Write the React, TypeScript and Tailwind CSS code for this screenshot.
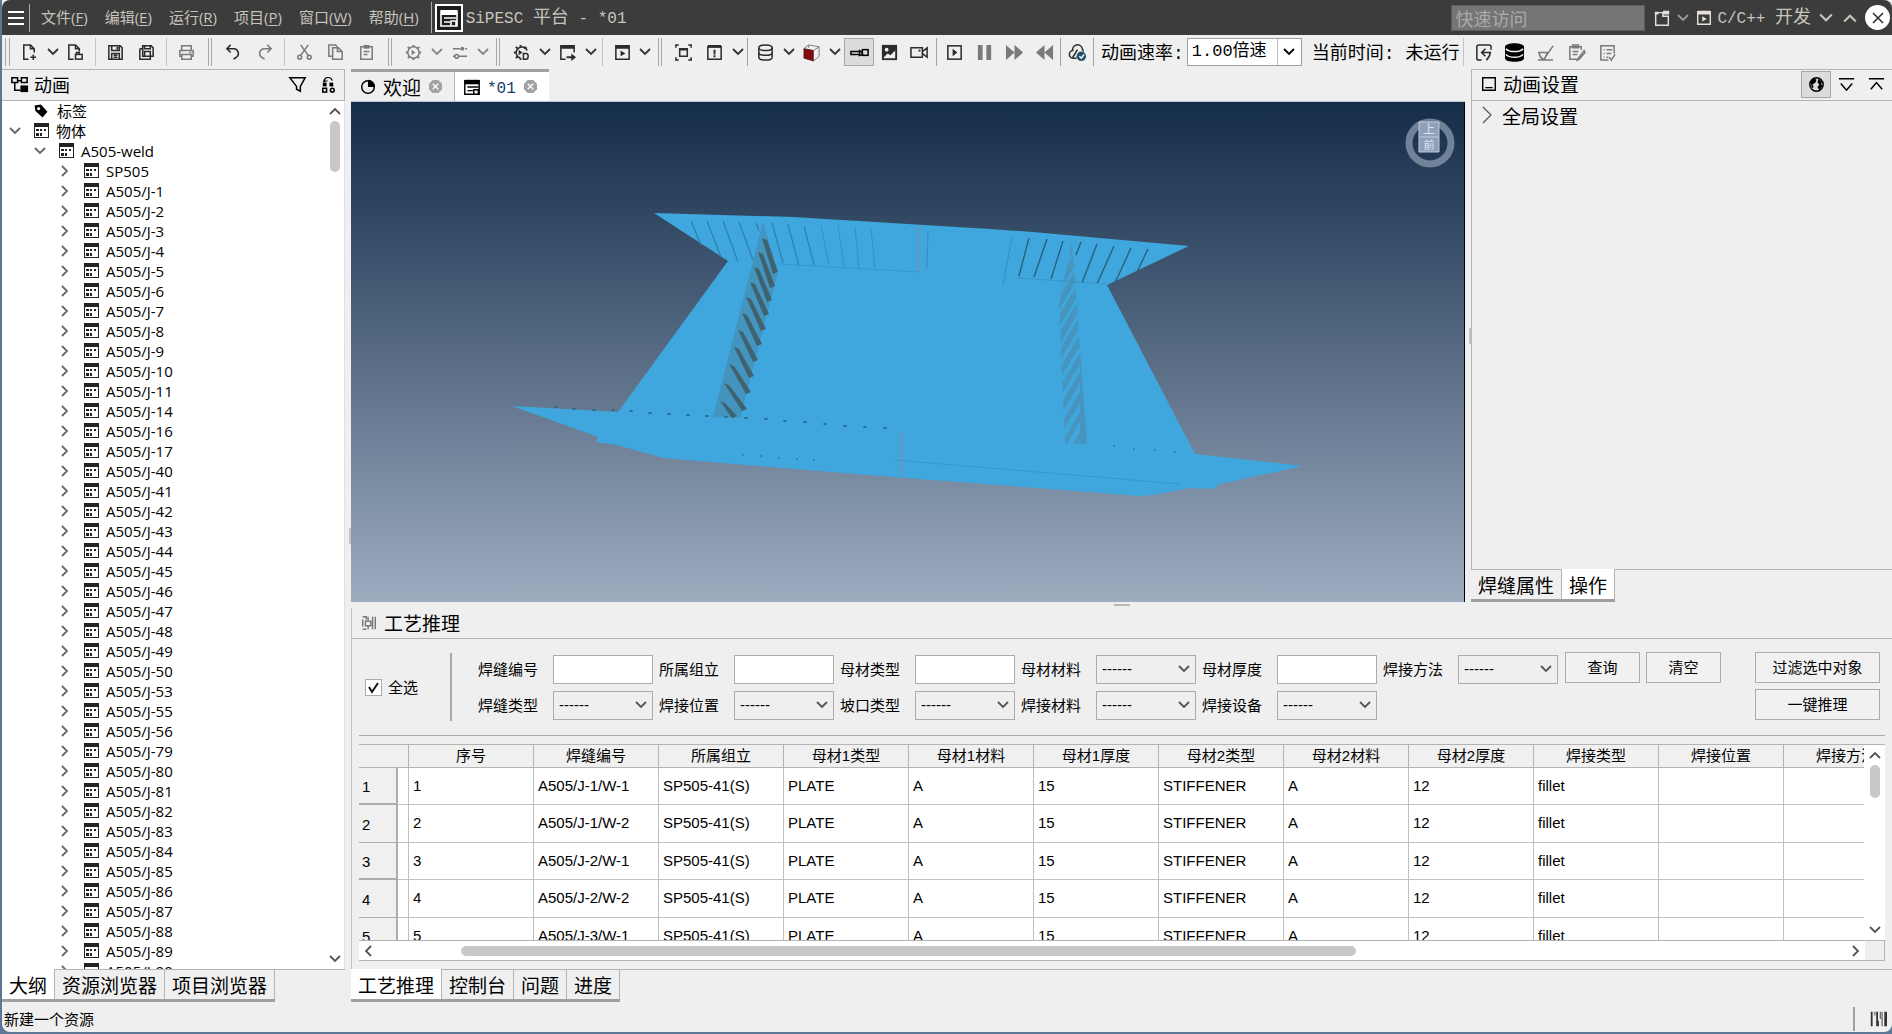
import { useState } from 'react'
import type { ReactNode } from 'react'
import clsx from 'clsx'

const CJK = "font-['Noto_Sans_CJK_SC',sans-serif]"
const MONO = "font-['Liberation_Mono','Noto_Sans_CJK_SC',monospace]"

const solid = { fill: 'currentColor', stroke: 'none' }

// every glyph is drawn on a 20 x 20 grid
const glyphs: Record<string, ReactNode> = {
  newFile: <path d="M9 17H4V2h7l4 4v4M11 2v4h4M14 12v6M11 15h6" />,
  fileLock: (
    <>
      <path d="M8 17H3V2h7l4 4v3M10 2v4h4" />
      <rect x="10" y="12" width="7" height="5" />
      <path d="M11 12v-2h3v2" />
    </>
  ),
  save: (
    <>
      <path d="M3 3h12l2 2v12H3zM6 3v5h8V3M6 17v-6h8v6M8 13h4M8 15h4" />
      <path d="M11 4h2v3h-2z" {...solid} />
    </>
  ),
  saveAll: (
    <>
      <path d="M6 3h9l2 2v9H6zM8 3v3h6V3M8 14v-5h6v5" />
      <path d="M3 6v11h11v-3M3 6h3" />
    </>
  ),
  print: <path d="M5 8V3h10v5M5 14H3V8h14v6h-2M5 12h10v5H5zM13 10h2" />,
  undo: <path d="M7 2L3 6l4 4M3 6h8a5 5 0 0 1 2 9l-3 2" />,
  redo: <path d="M13 2l4 4-4 4M17 6H9a5 5 0 0 0-2 9l3 2" />,
  cut: (
    <>
      <circle cx="5" cy="15" r="2" />
      <circle cx="15" cy="15" r="2" />
      <path d="M6 13L14 2M14 13L6 2" />
    </>
  ),
  copy: <path d="M6 14H3V2h7l2 2M7 5h6l4 4v8H7zM12 5v4h4" />,
  paste: (
    <>
      <path d="M4 4h12v13H4zM7 9h6M7 12h4" />
      <path d="M7 2h6v4H7z" {...solid} />
    </>
  ),
  gearPlay: (
    <>
      <circle cx="10" cy="10" r="6" />
      <path d="M10 2v2M10 16v2M2 10h2M16 10h2M4 4l2 2M14 14l2 2M16 4l-2 2M4 16l2-2" strokeWidth="2" />
      <path d="M8 7l4 3-4 3z" {...solid} />
    </>
  ),
  gearD: (
    <>
      <path d="M16 8a6 6 0 1 0-7 8" />
      <path d="M9 2v2M2 10h2M4 4l2 2M15 4l-2 2M4 16l2-2M9 16v2" strokeWidth="2" />
      <path d="M7 7l4 3-4 3z" {...solid} />
      <path d="M12 11h3a2 3 0 0 1 0 6h-3z" />
    </>
  ),
  sliders: (
    <>
      <path d="M3 6h8M16 6h2M3 14h2M9 14h9" />
      <circle cx="13" cy="6" r="2" {...solid} />
      <circle cx="7" cy="14" r="2" />
    </>
  ),
  windowOut: (
    <>
      <path d="M8 17H3V3h14v7" />
      <path d="M3 2h14v4H3zM14 11l5 4-5 4z" {...solid} />
      <path d="M9 15h6" strokeWidth="2" />
    </>
  ),
  windowPlay: (
    <>
      <path d="M3 3h14v14H3z" />
      <path d="M3 2h14v4H3zM8 8l5 3-5 3z" {...solid} />
    </>
  ),
  fit: <path d="M6 6h8v8H6zM2 5V2h3M15 2h3v3M18 15v3h-3M5 18H2v-3M6 7h8" strokeWidth="1.6" />,
  alertBox: (
    <>
      <path d="M3 4h14v13H3z" />
      <path d="M3 2h14v3H3zM9 7h2v5H9zM9 13h2v2H9z" {...solid} />
    </>
  ),
  database: (
    <>
      <ellipse cx="10" cy="5" rx="7" ry="3" />
      <path d="M3 5v10c0 4 14 4 14 0V5M3 10c0 4 14 4 14 0" />
    </>
  ),
  cube: (
    <>
      <path d="M2 6l5-4 11 2v10l-6 5M2 6l10 2 6-4M7 2v3" stroke="#777" strokeWidth="1" />
      <path d="M2 6l10 2v11L2 16z" fill="#820c0c" stroke="#400" strokeWidth="0.6" />
    </>
  ),
  pipe: (
    <>
      <path d="M1 9h9v3H1zM10 8l3 2v2l-3 1z" />
      <rect x="13" y="7" width="6" height="6" />
    </>
  ),
  image: (
    <>
      <rect x="2" y="2" width="16" height="16" {...solid} />
      <circle cx="7" cy="7" r="2" fill="#efefef" stroke="none" />
      <path d="M4 15l4-4 3 2 5-5v8H4z" fill="#efefef" stroke="none" />
    </>
  ),
  camera: (
    <>
      <path d="M1 5h12v10H1zM13 9l5-4v10l-5-4" />
      <path d="M9 7h2v2H9z" {...solid} />
    </>
  ),
  play: (
    <>
      <rect x="3" y="3" width="14" height="14" />
      <path d="M8 6l5 4-5 4z" {...solid} />
    </>
  ),
  pause: <path d="M3 2h5v16H3zM12 2h5v16h-5z" {...solid} />,
  forward: <path d="M1 2l9 8-9 8zM10 2l9 8-9 8z" {...solid} />,
  rewind: <path d="M19 2l-9 8 9 8zM10 2l-9 8 9 8z" {...solid} />,
  cloud: (
    <>
      <path d="M9 16H6a4 4 0 0 1-1-8 5 5 0 0 1 10-2c1 1 1 2 1 3M5 15l5-8" />
      <circle cx="14" cy="14" r="5" fill="#24506f" stroke="none" />
      <path d="M12 14l2 2 3-4" stroke="#fff" />
    </>
  ),
  back: <path d="M18 7V4a2 2 0 0 0-2-2H5a2 2 0 0 0-2 2v12c0 1 1 2 2 2h3M18 10H8M12 6l-4 4 4 4M17 10c0 4-2 6-4 8" />,
  databaseSolid: (
    <>
      <path d="M0 4c0-5 20-5 20 0v12c0 5-20 5-20 0z" {...solid} className="text-black" />
      <path d="M1 6c3 4 15 4 18 0M1 12c3 4 15 4 18 0" stroke="#efefef" />
    </>
  ),
  brush: <path d="M2 18h16M18 3L9 16M3 10h9l-3 7c-4 0-5-3-6-7z" />,
  clipEdit: <path d="M15 7V4H3v13h8l3-1M6 2h6v3H6zM6 9h6M6 12h5M18 8l-6 8-1 2 2-1 6-7z" />,
  listCheck: <path d="M17 11V3H3v15h8M6 7h1M9 7h6M6 11h1M9 11h5M6 15h1M9 15h2M12 15l2 3 4-6" />,
  tree: (
    <>
      <path d="M2 3h6v5H2zM12 3h6v5h-6zM8 6h4M5 8v8h6" />
      <rect x="11" y="11" width="8" height="7" {...solid} />
    </>
  ),
  funnel: <path d="M2 3h16l-5 9v5l-4-2v-3z" />,
  link: (
    <>
      <path d="M5 6c2-5 8-4 9 0M7 3L5 7l4-1" strokeWidth="1.2" />
      <rect x="4" y="8" width="4" height="4" {...solid} />
      <rect x="11" y="8" width="4" height="4" {...solid} />
      <rect x="4" y="14" width="4" height="4" />
      <circle cx="14" cy="16" r="2" />
    </>
  ),
  pie: (
    <>
      <circle cx="10" cy="10" r="7" />
      <path d="M10 2a8 8 0 0 1 8 8h-8z" {...solid} />
    </>
  ),
  form: (
    <>
      <path d="M2 3h16v15H2zM5 10h12M5 14h6M12 13h5v5h-5z" />
      <path d="M2 2h16v5H2z" {...solid} />
    </>
  ),
  panel: <path d="M3 3h14v14H3zM6 14h8" />,
  globe: (
    <>
      <circle cx="10" cy="10" r="7" />
      <path d="M4 7l3-4 3 2-1 3-3 2 1 3-2 1zM12 4l4 3-1 2 1 3-3 4-2-3 2-3-2-2z" {...solid} />
    </>
  ),
  collapse: <path d="M2 4h16M4 9l6 7 6-7" />,
  expand: <path d="M2 4h16M4 15l6-7 6 7" />,
  folder: (
    <>
      <path d="M3 4h8v4h6v10H3z" />
      <path d="M11 2h7v4h-7zM2 3h4v3H2z" {...solid} />
    </>
  ),
  reason: <path d="M3 3h4v3M3 17h4M3 6v8M6 8h6v5H6zM14 3v14M17 3v14M9 3v4M9 13v4" />,
  tag: (
    <>
      <path d="M2 3l8-1 8 9-6 7-9-8z" {...solid} />
      <circle cx="7" cy="7" r="2" fill="#fff" stroke="none" />
    </>
  ),
  body: (
    <path
      fillRule="evenodd"
      d="M2 2h15v15H2zM3 6v10h13V6zM4 8h3v2H4zM8 8h2v2H8zM12 8h2v2h-2zM4 12h3v3H4zM8 12h2v3H8z"
      {...solid}
    />
  ),
  heap: <path d="M2 2h2v16H2zM6 2h1v4H6zM8 2h2v16H8zM12 2h1v8h-1zM14 2h1v16h-1zM17 2h3v16h-3zM10 12h1v6h-1z" {...solid} />,
}

function Icon({ name, className }: { name: string; className?: string }) {
  return (
    <svg
      viewBox="0 0 20 20"
      className={clsx('shrink-0', className ?? 'size-[19px]')}
      fill="none"
      stroke="currentColor"
      strokeWidth="1.6"
      aria-hidden="true"
    >
      {glyphs[name]}
    </svg>
  )
}

const turns = { down: 'rotate-0', up: 'rotate-180', left: 'rotate-90', right: '-rotate-90' }

function Chevron({ dir = 'down', className }: { dir?: keyof typeof turns; className?: string }) {
  return (
    <svg
      viewBox="0 0 12 12"
      className={clsx('size-3 shrink-0', turns[dir], className)}
      fill="none"
      stroke="currentColor"
      strokeWidth="1.8"
      aria-hidden="true"
    >
      <path d="M1 3l5 5 5-5" />
    </svg>
  )
}

const menus = [
  ['文件', 'F'],
  ['编辑', 'E'],
  ['运行', 'R'],
  ['项目', 'P'],
  ['窗口', 'W'],
  ['帮助', 'H'],
]

function TitleBar() {
  return (
    <header className="flex h-[35px] shrink-0 items-center rounded-t-lg bg-[#3c3c3c] text-[#c8c4bc]">
      <button aria-label="菜单" className="flex h-7 w-7 flex-col justify-center gap-1 border-r border-[#b0b0b0] pr-1 pl-1.5">
        <span className="h-0.5 w-4 bg-white" />
        <span className="h-0.5 w-4 bg-white" />
        <span className="h-0.5 w-4 bg-white" />
      </button>
      <nav className="ml-[11px] flex gap-[17px] pb-px text-[15px]">
        {menus.map(([label, key]) => (
          <button key={key} className="font-['Open_Sans','Noto_Sans_CJK_SC',sans-serif]">
            {label}(<u className="underline-offset-2">{key}</u>)
          </button>
        ))}
      </nav>
      <div className="ml-3 flex h-[31px] items-center border-l border-[#b0b0b0] pl-[3px]">
        <span className="flex size-7 items-center justify-center border-2 border-white bg-[#1c1c1c] text-white">
          <Icon name="form" className="size-5" />
        </span>
      </div>
      <h1 className={clsx(MONO, 'ml-[3px] text-base whitespace-pre')}>
        SiPESC <span className="text-lg">平台</span> - *01
      </h1>
      <div className="ml-auto flex items-center">
        <input
          aria-label="快速访问"
          placeholder="快速访问"
          className="h-[26px] w-[194px] border border-[#5c5c5c] bg-[#757575] px-[3px] text-lg placeholder-[#aaa] outline-none"
        />
        <button aria-label="打开透视图" className="ml-2 text-[#e4e0d8]">
          <Icon name="folder" className="size-[18px]" />
        </button>
        <Chevron className="ml-1.5 text-[#999]" />
        <button className={clsx(MONO, 'ml-1.5 flex items-center gap-1 text-base whitespace-pre')}>
          <Icon name="windowPlay" className="size-[18px] text-[#e4e0d8]" />
          <span>
            C/C++ <span className="text-lg">开发</span>
          </span>
        </button>
        <button aria-label="最小化" className="ml-1.5 p-0.5">
          <Chevron className="size-[14px]" />
        </button>
        <button aria-label="最大化" className="ml-1.5 p-0.5">
          <Chevron dir="up" className="size-[14px]" />
        </button>
        <button
          aria-label="关闭"
          className="mr-0.5 ml-1.5 flex size-[25px] items-center justify-center rounded-full bg-white text-[#333]"
        >
          <svg viewBox="0 0 12 12" className="size-3" stroke="currentColor" strokeWidth="1.6">
            <path d="M1 1l10 10M11 1L1 11" />
          </svg>
        </button>
      </div>
    </header>
  )
}

function Tool({ name, label, faded, menu, wide }: { name: string; label: string; faded?: boolean; menu?: boolean; wide?: boolean }) {
  return (
    <>
      <button
        aria-label={label}
        className={clsx('flex h-7 items-center justify-center', wide ? 'w-[31px]' : 'w-[30px]', faded ? 'text-[#7a7a7a]' : 'text-[#2b2b2b]')}
      >
        <Icon name={name} />
      </button>
      {menu && (
        <button aria-label={`${label}选项`} className={clsx('flex h-7 w-[15px] items-center justify-center', faded ? 'text-[#888]' : 'text-[#333]')}>
          <Chevron className="size-2.5" />
        </button>
      )}
    </>
  )
}

function Sep() {
  return <span className="mx-1 h-7 w-px bg-[#c4c4c4]" />
}

function Grip() {
  return <span className="mx-1.5 h-7 w-1 border-x border-[#a8a8a8]" />
}

function Toolbar() {
  return (
    <div className="flex h-[34px] shrink-0 items-center overflow-hidden pl-[3px]">
      <span className="mr-1 h-7 w-[5px] border-x border-[#a8a8a8]" />
      <Tool wide name="newFile" label="新建" menu />
      <Tool wide name="fileLock" label="导入" />
      <Sep />
      <Tool wide name="save" label="保存" />
      <Tool wide name="saveAll" label="全部保存" />
      <Sep />
      <Tool wide name="print" label="打印" faded />
      <Grip />
      <Tool wide name="undo" label="撤销" />
      <Tool wide name="redo" label="重做" faded />
      <Sep />
      <Tool wide name="cut" label="剪切" faded />
      <Tool wide name="copy" label="复制" faded />
      <Tool wide name="paste" label="粘贴" faded />
      <Grip />
      <Tool wide name="gearPlay" label="构建" faded menu />
      <Tool wide name="sliders" label="参数" faded menu />
      <Grip />
      <Tool wide name="gearD" label="调试" menu />
      <Tool wide name="windowOut" label="外部工具" menu />
      <Sep />
      <Tool name="windowPlay" label="运行" menu />
      <Grip />
      <Tool wide name="fit" label="适应窗口" />
      <Tool wide name="alertBox" label="提示" menu />
      <span className="mx-0.5 h-7 w-px bg-[#a0a0a0]" />
      <Tool wide name="database" label="数据" menu />
      <Tool wide name="cube" label="立方体" menu />
      <span className="w-0.5" />
      <button aria-label="剖面" aria-pressed="true" className="flex h-7 w-[30px] items-center justify-center border border-[#a6a6a6] bg-[#dcdcdc]">
        <Icon name="pipe" />
      </button>
      <Tool name="image" label="截图" />
      <Tool name="camera" label="录像" />
      <span className="mx-0.5 h-7 w-px bg-[#a0a0a0]" />
      <Tool name="play" label="播放" />
      <Tool name="pause" label="暂停" faded />
      <Tool name="forward" label="快进" faded />
      <Tool name="rewind" label="快退" faded />
      <span className="mx-px h-7 w-px bg-[#a0a0a0]" />
      <Tool name="cloud" label="云" />
      <span className="mx-px h-7 w-px bg-[#a0a0a0]" />
      <label htmlFor="speed" className="ml-1.5 text-lg whitespace-nowrap">
        动画速率<span className={MONO}>:</span>
      </label>
      <span className="relative ml-[3px] flex h-7 w-[115px] shrink-0 border border-[#a0a0a0] bg-white">
        <select id="speed" className={clsx(MONO, 'w-full appearance-none pl-1 text-[17px]')}>
          <option>1.00倍速</option>
        </select>
        <span className="pointer-events-none absolute inset-y-0 right-0 flex w-6 items-center justify-center border-l border-[#c0c0c0]">
          <Chevron />
        </span>
      </span>
      <p className="ml-2.5 text-lg whitespace-pre">
        当前时间<span className={MONO}>: </span>未运行
      </p>
      <span className="ml-1 h-7 w-px bg-[#c4c4c4]" />
      <span className="w-1" />
      <Tool wide name="back" label="返回" />
      <Tool wide name="databaseSolid" label="数据库" />
      <Tool wide name="brush" label="清理" faded />
      <Tool wide name="clipEdit" label="编辑" faded />
      <Tool wide name="listCheck" label="检查" faded />
    </div>
  )
}

interface TreeRow {
  label: string
  depth: number
  icon: string
  open?: boolean
}

const joints = [
  1, 2, 3, 4, 5, 6, 7, 8, 9, 10, 11, 14, 16, 17, 40, 41, 42, 43, 44, 45, 46, 47, 48, 49, 50, 53, 55, 56, 79, 80, 81,
  82, 83, 84, 85, 86, 87, 88, 89, 90,
]

const rows: TreeRow[] = [
  { label: '物体', depth: 0, icon: 'body', open: true },
  { label: 'A505-weld', depth: 1, icon: 'body', open: true },
  { label: 'SP505', depth: 2, icon: 'body' },
  ...joints.map(n => ({ label: `A505/J-${n}`, depth: 2, icon: 'body' })),
]

const indents = ['pl-[5px]', 'pl-[30px]', 'pl-[55px]']

function Outline() {
  return (
    <section className="flex min-h-0 flex-1 flex-col">
      <div className="flex h-8 shrink-0 items-center border-y border-r border-[#b4b4b4] pr-1.5 pb-0.5 pl-2">
        <Icon name="tree" />
        <h2 className="ml-[5px] text-lg">动画</h2>
        <button aria-label="过滤" className="ml-auto">
          <Icon name="funnel" />
        </button>
        <button aria-label="联动" className="ml-3">
          <Icon name="link" />
        </button>
      </div>
      <div className="flex min-h-0 flex-1 bg-white">
        <ul className="min-h-0 flex-1 overflow-hidden font-['Open_Sans','Noto_Sans_CJK_SC',sans-serif] text-[15px]">
          <li className="flex h-5 items-center gap-2 pl-[31px]">
            <Icon name="tag" className="size-4" />
            标签
          </li>
          {rows.map(row => (
            <li key={row.label} className={clsx('flex h-5 items-center', indents[row.depth])}>
              <button aria-label={`展开 ${row.label}`} className="flex size-4 items-center justify-center text-[#666]">
                <Chevron dir={row.open ? 'down' : 'right'} />
              </button>
              <Icon name={row.icon} className="ml-[9px] size-5 text-[#222]" />
              <span className="ml-1">{row.label}</span>
            </li>
          ))}
        </ul>
        <div className="flex w-5 flex-col items-center border-r border-[#e0e0e0] py-1 text-[#555]">
          <Chevron dir="up" />
          <span className="mt-1 h-[51px] w-2.5 rounded-full bg-[#c8c8c8]" />
          <Chevron className="mt-auto" />
        </div>
      </div>
    </section>
  )
}

function BottomTabs({ tabs, active }: { tabs: string[]; active: number }) {
  const [current, setCurrent] = useState(active)
  return (
    <div className="flex h-[33px] shrink-0">
      <div className="flex border-b-[3px] border-[#a0a0a0]">
        {tabs.map((tab, i) => (
          <button
            key={tab}
            onClick={() => setCurrent(i)}
            className={clsx('border-r border-[#b4b4b4] px-[7px] text-[19px] leading-none', i === current ? 'bg-white' : 'border-t')}
          >
            {tab}
          </button>
        ))}
      </div>
      <span className="flex-1 border-t border-[#b4b4b4]" />
    </div>
  )
}

function CloseMark() {
  return (
    <svg viewBox="0 0 14 14" className="size-[13px]" aria-hidden="true">
      <path d="M4 0h6l4 4v6l-4 4H4l-4-4V4z" fill="#a2a2a2" />
      <path d="M4 4l6 6M10 4l-6 6" stroke="#fff" strokeWidth="1.4" />
    </svg>
  )
}

function EditorTabs() {
  return (
    <div className="flex h-[33px] shrink-0 border-b border-[#b8c4d4]">
      <div className="flex border-t-[3px] border-[#a0a0a0]">
        <div className="flex items-center border-r border-[#b4b4b4] pr-3 pl-2">
          <Icon name="pie" className="size-[18px]" />
          <span className="ml-1.5 text-[19px] leading-none">欢迎</span>
          <button aria-label="关闭 欢迎" className="ml-2">
            <CloseMark />
          </button>
        </div>
        <div className="flex items-center bg-white pr-3 pl-2">
          <Icon name="form" className="size-[18px]" />
          <span className={clsx(MONO, 'ml-1.5 pt-1 text-base leading-none text-[#12406a]')}>*01</span>
          <button aria-label="关闭 *01" className="ml-2">
            <CloseMark />
          </button>
        </div>
      </div>
    </div>
  )
}

// stiffener slots of the left web, each from its upper left to its lower right end
const slots = [
  [762, 238, 777, 274],
  [758, 252, 774, 288],
  [754, 267, 771, 302],
  [750, 282, 768, 316],
  [746, 297, 765, 331],
  [742, 313, 761, 346],
  [738, 330, 757, 362],
  [734, 347, 753, 378],
  [729, 364, 750, 394],
  [724, 383, 746, 411],
  [720, 401, 736, 418],
]

const leftRibs =
  'M691 221l10 24M707 221l14 36M723 221l15 41M739 222l14 38M756 223l3 8M772 223l11 40M788 224l11 42M804 226l10 39'
const faintRibs = 'M821 225l8 40M838 225l6 42M855 227l4 41M871 228l4 40M1012 237l-9 48M928 231l-1 38'
const rightRibs =
  'M1029 238l-10 38M1047 239l-13 38M1063 241l-12 38M1081 242l-5 13M1097 244l-15 39M1114 246l-17 38M1131 248l-17 37M1148 249l-13 27'

const seamDots = [
  [556, 407], [574, 409], [594, 410], [613, 410], [631, 411], [650, 413], [669, 414], [688, 415], [707, 416],
  [726, 417], [746, 418], [766, 419], [785, 421], [805, 422], [825, 424], [845, 426], [865, 427], [885, 428],
]

const faintDots = [
  [743, 455], [761, 456], [779, 458], [797, 459], [814, 460], [1114, 446], [1134, 449], [1155, 450], [1175, 452],
]

const webStreaks = [252, 268, 284, 300, 316, 332, 349, 366, 384, 402, 420, 436]

function Viewport() {
  return (
    <div className="relative min-h-0 flex-1 border-r border-black bg-linear-to-b from-[#142d49] to-[#9eadc0]">
      <svg viewBox="351 102 1113 500" className="block size-full" aria-label="A505-weld">
        <path
          fill="#3fa7dd"
          d="M654 213L793 217 990 229 1033 232 1189 246 1107 285 1195 454 1303 466 1220 484 1213 489 1190 488 1153 495 1140 496 880 476 663 458 617 445 596 442 598 437 512 406 618 412 728 261z"
        />
        <path d={leftRibs} stroke="#2f7fa8" strokeWidth="1.2" fill="none" />
        <path d={faintRibs} stroke="#368fc0" fill="none" />
        <path d={rightRibs} stroke="#2b5f7c" strokeWidth="1.4" fill="none" />
        <path d="M763 222L713 417 740 418 778 272z" fill="#4394bf" />
        {slots.map(([x1, y1, x2, y2]) => (
          <polygon key={y1} points={`${x1},${y1} ${x1 + 5},${y1 + 2} ${x2 + 1},${y2 - 2} ${x2 - 4},${y2}`} fill="#40626f" />
        ))}
        <path d="M1072 242L1087 444 1065 443 1059 305z" fill="#4795bf" />
        {webStreaks.map((y, i) => (
          <path
            key={y}
            d={`M${1074 + i} ${y}l-20 34`}
            stroke="#3fa7dd"
            strokeWidth={2 + i * 0.3}
            clipPath="url(#web)"
          />
        ))}
        <clipPath id="web">
          <path d="M1040 240H1080V443H1040z" />
        </clipPath>
        {seamDots.map(([x, y]) => (
          <ellipse key={`${x}-${y}`} cx={x} cy={y} rx="2" ry="1" fill="#2c6a8c" />
        ))}
        {faintDots.map(([x, y]) => (
          <ellipse key={`${x}-${y}`} cx={x} cy={y} rx="1" ry="1" fill="#2c7cab" />
        ))}
        <path d="M778 264L919 272M1018 278L1105 284M894 460L1180 484" stroke="#3a96c8" fill="none" />
        <path d="M919 225v48M901 432l1 45" stroke="#7c8cae" strokeWidth="1.2" fill="none" />
        <g>
          <circle cx="1430" cy="143" r="21" fill="none" stroke="#8595aa" strokeWidth="7" opacity="0.8" />
          <path d="M1419 122h20v30h-20z" fill="#8fa0b8" />
          <path d="M1419 137h20M1419 122h20v30h-20z" stroke="#c2ccd8" fill="none" />
          <text x="1429" y="134" textAnchor="middle" fontSize="12" fill="#dde4ee">上</text>
          <text x="1429" y="149" textAnchor="middle" fontSize="11" fill="#dde4ee">前</text>
        </g>
      </svg>
    </div>
  )
}

function Settings() {
  return (
    <aside className="flex w-[421px] shrink-0 flex-col">
      <div className="flex min-h-0 flex-1 flex-col border-l border-[#b4b4b4]">
        <div className="flex h-8 shrink-0 items-center border-y border-[#b4b4b4] pr-1.5 pb-0.5 pl-2">
          <Icon name="panel" className="size-[18px]" />
          <h2 className="ml-[5px] pb-0.5 text-[19px] leading-none">动画设置</h2>
          <button aria-label="全局" className="ml-auto flex h-[27px] w-[30px] items-center justify-center border border-[#a6a6a6] bg-[#dcdcdc]">
            <Icon name="globe" />
          </button>
          <button aria-label="全部折叠" className="ml-1.5">
            <Icon name="collapse" />
          </button>
          <button aria-label="全部展开" className="ml-[11px]">
            <Icon name="expand" />
          </button>
        </div>
        <button className="flex h-7 items-center pl-2.5 text-[19px] leading-none">
          <svg viewBox="0 0 10 18" className="h-[18px] w-2.5" fill="none" stroke="#555" strokeWidth="1.2">
            <path d="M1 1l8 8-8 8" />
          </svg>
          <span className="ml-2.5">全局设置</span>
        </button>
      </div>
      <BottomTabs tabs={['焊缝属性', '操作']} active={1} />
    </aside>
  )
}

type Field = { label: string; kind: 'text' | 'select' }

const fieldRows: Field[][] = [
  [
    { label: '焊缝编号', kind: 'text' },
    { label: '所属组立', kind: 'text' },
    { label: '母材类型', kind: 'text' },
    { label: '母材材料', kind: 'select' },
    { label: '母材厚度', kind: 'text' },
    { label: '焊接方法', kind: 'select' },
  ],
  [
    { label: '焊缝类型', kind: 'select' },
    { label: '焊接位置', kind: 'select' },
    { label: '坡口类型', kind: 'select' },
    { label: '焊接材料', kind: 'select' },
    { label: '焊接设备', kind: 'select' },
  ],
]

function FilterField({ label, kind }: Field) {
  return (
    <div className="flex items-center">
      <label htmlFor={label} className="w-[75px]">
        {label}
      </label>
      {kind === 'text' ? (
        <input id={label} className="h-[29px] w-[100px] border border-[#acacac] bg-white px-1 outline-none" />
      ) : (
        <span className="relative flex h-[29px] w-[100px] items-center border border-[#acacac]">
          <select id={label} className="size-full appearance-none pl-[5px] font-['Liberation_Sans',sans-serif] text-[15px]">
            <option>------</option>
          </select>
          <Chevron className="pointer-events-none absolute right-[5px] text-[#555]" />
        </span>
      )}
    </div>
  )
}

const plainButton = 'h-[31px] border border-[#acacac] bg-[#f1f1f1]'

function Filters() {
  return (
    <form className="flex h-[97px] shrink-0 items-center border-b border-[#acacac] text-[15px]" onSubmit={e => e.preventDefault()}>
      <label className="ml-1.5 flex items-center gap-1.5">
        <span className="relative flex">
          <input type="checkbox" defaultChecked className="peer size-[17px] appearance-none border border-[#acacac] bg-white" />
          <svg
            viewBox="0 0 17 17"
            className="pointer-events-none absolute inset-0 hidden peer-checked:block"
            fill="none"
            stroke="#111"
            strokeWidth="2"
          >
            <path d="M4 8l3 5 6-9" />
          </svg>
        </span>
        全选
      </label>
      <span className="ml-8 h-[68px] w-0.5 bg-[#a8a8a8]" />
      <div className="ml-[26px] flex flex-col gap-[7px]">
        {fieldRows.map((fields, i) => (
          <div key={i} className="flex gap-1.5">
            {fields.map(field => (
              <FilterField key={field.label} {...field} />
            ))}
          </div>
        ))}
      </div>
      <div className="ml-[7px] flex gap-1.5 self-start pt-[13px]">
        <button className={clsx(plainButton, 'w-[75px]')}>查询</button>
        <button className={clsx(plainButton, 'w-[75px]')}>清空</button>
      </div>
      <div className="mr-[5px] ml-auto flex flex-col gap-1.5 self-start pt-[13px]">
        <button className={clsx(plainButton, 'w-[125px]')}>过滤选中对象</button>
        <button className={clsx(plainButton, 'w-[125px]')}>一键推理</button>
      </div>
    </form>
  )
}

const columns = [
  '序号', '焊缝编号', '所属组立', '母材1类型', '母材1材料', '母材1厚度', '母材2类型', '母材2材料', '母材2厚度',
  '焊接类型', '焊接位置', '焊接方法',
]

const welds = ['A505/J-1/W-1', 'A505/J-1/W-2', 'A505/J-2/W-1', 'A505/J-2/W-2', 'A505/J-3/W-1'].map((id, i) => [
  String(i + 1), id, 'SP505-41(S)', 'PLATE', 'A', '15', 'STIFFENER', 'A', '12', 'fillet', '', '',
])

function WeldTable() {
  return (
    <div className="mt-2 flex min-h-0 flex-1 flex-col border-t border-b border-[#b4b4b4]">
      <div className="flex min-h-0 flex-1">
        <div className="min-w-0 flex-1 overflow-hidden bg-white">
          <table className="w-[1550px] table-fixed border-separate border-spacing-0 font-['Liberation_Sans','Noto_Sans_CJK_SC',sans-serif] text-[15px]">
            <colgroup>
              <col className="w-[39px]" />
              <col className="w-[11px]" />
              {columns.map(c => (
                <col key={c} className="w-[125px]" />
              ))}
            </colgroup>
            <thead>
              <tr className="h-[23px] bg-[#f0f0f0]">
                <th className="border-b border-[#b4b4b4]" />
                <th className="border-r border-b border-[#b4b4b4]" />
                {columns.map(c => (
                  <th key={c} className="border-r border-b border-[#b4b4b4] p-0 leading-[22px] font-normal">
                    {c}
                  </th>
                ))}
              </tr>
            </thead>
            <tbody>
              {welds.map((weld, i) => (
                <tr key={weld[1]} className={i % 2 ? 'h-[38px]' : 'h-[37px]'}>
                  <th
                    className={clsx(
                      'border-r-2 border-[#acacac] bg-[#f0f0f0] p-0 pt-1 pl-[3px] text-left font-normal',
                      i % 2 ? 'border-b' : 'border-b-2',
                    )}
                  >
                    {i + 1}
                  </th>
                  <td className="border-r border-b border-[#c0c0c0]" />
                  {weld.map((value, n) => (
                    <td key={n} className="border-r border-b border-[#c0c0c0] p-0 pl-1">
                      {value}
                    </td>
                  ))}
                </tr>
              ))}
            </tbody>
          </table>
        </div>
        <div className="flex w-[21px] flex-col items-center bg-white py-1 text-[#555]">
          <Chevron dir="up" />
          <span className="mt-1 h-[33px] w-2.5 rounded-full bg-[#c8c8c8]" />
          <Chevron className="mt-auto" />
        </div>
      </div>
      <div className="flex h-5 shrink-0 border-t border-[#b4b4b4]">
        <div className="flex flex-1 items-center bg-white px-[3px] text-[#555]">
          <Chevron dir="left" />
          <div className="mx-3 flex flex-1 pl-[75px]">
            <span className="h-2.5 w-[65%] rounded-full bg-[#c8c8c8]" />
          </div>
          <Chevron dir="right" />
        </div>
        <span className="w-5 border-r border-[#b4b4b4]" />
      </div>
    </div>
  )
}

export default function App() {
  return (
    <div className={clsx(CJK, 'h-screen overflow-hidden bg-[#5d7796] pb-0.5 pl-0.5 text-black')}>
      <div className="flex h-full flex-col rounded-b-lg bg-[#efefef]">
        <TitleBar />
        <Toolbar />
        <div className="flex min-h-0 flex-1">
          <div className="flex w-[343px] shrink-0 flex-col">
            <Outline />
            <BottomTabs tabs={['大纲', '资源浏览器', '项目浏览器']} active={0} />
          </div>
          <div className="flex w-1.5 shrink-0 items-center justify-end">
            <span className="h-4 w-0.5 bg-[#c4c4c4]" />
          </div>
          <div className="flex min-w-0 flex-1 flex-col">
            <div className="flex min-h-0 flex-1">
              <div className="flex min-w-0 flex-1 flex-col">
                <EditorTabs />
                <Viewport />
              </div>
              <div className="flex w-1.5 shrink-0 items-center justify-end">
                <span className="h-4 w-0.5 bg-[#c4c4c4]" />
              </div>
              <Settings />
            </div>
            <div className="flex h-1.5 shrink-0 items-center justify-center">
              <span className="h-0.5 w-4 bg-[#b8b8b8]" />
            </div>
            <section className="flex h-[361px] shrink-0 flex-col border-l border-[#c0c0c0]">
              <div className="flex h-[31px] shrink-0 items-center border-b border-[#b4b4b4] pl-2">
                <Icon name="reason" className="size-[18px] text-[#777]" />
                <h2 className="ml-1.5 pb-0.5 text-[19px] leading-none">工艺推理</h2>
              </div>
              <div className="flex min-h-0 flex-1 flex-col px-[7px] pb-2">
                <Filters />
                <WeldTable />
              </div>
            </section>
            <BottomTabs tabs={['工艺推理', '控制台', '问题', '进度']} active={0} />
          </div>
        </div>
        <footer className="flex h-[30px] shrink-0 items-center pt-1 pr-[5px] pl-0.5 text-[15px]">
          <span>新建一个资源</span>
          <span className="mr-3.5 ml-auto h-6 w-0.5 bg-[#a0a0a0]" />
          <button aria-label="堆内存" className="text-[#333]">
            <Icon name="heap" className="size-[18px]" />
          </button>
        </footer>
      </div>
    </div>
  )
}
